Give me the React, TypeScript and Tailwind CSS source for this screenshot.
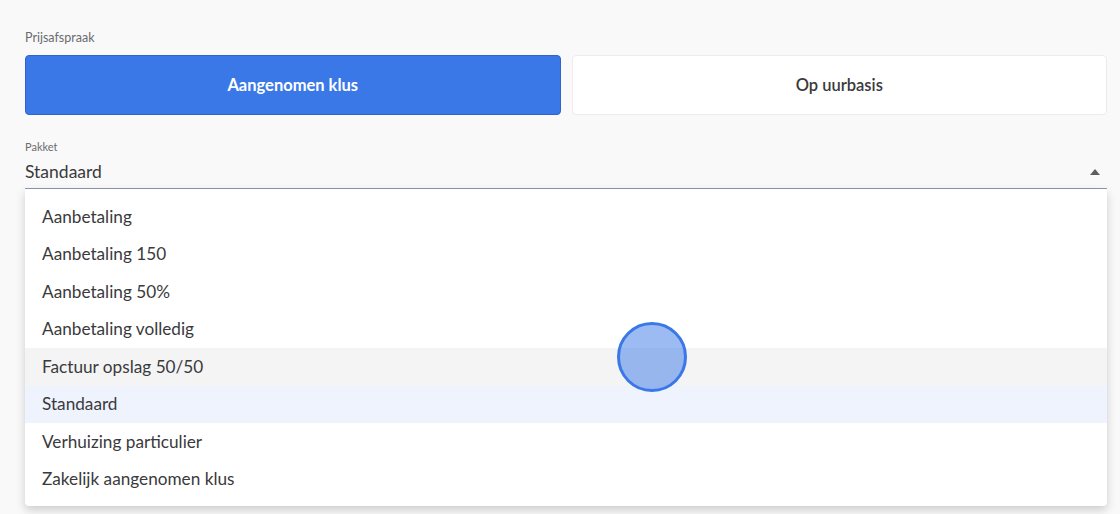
const options = [
  'Aanbetaling',
  'Aanbetaling 150',
  'Aanbetaling 50%',
  'Aanbetaling volledig',
  'Factuur opslag 50/50',
  'Standaard',
  'Verhuizing particulier',
  'Zakelijk aangenomen klus',
]

export default function App() {
  const hovered = 'Factuur opslag 50/50'
  const selected = 'Standaard'

  return (
    <div
      className="relative h-[514px] w-[1120px] overflow-hidden bg-[#f9f9fa] pl-[25px] pr-[13px] pt-[30px] text-[#3a3a3c]"
      style={{ fontFamily: 'Lato, "Open Sans", sans-serif' }}
    >
      <div className="text-[12.5px] leading-[16px] text-[#6b6b6e]">Prijsafspraak</div>
      <div className="mt-[9px] flex gap-[11px]">
        <button className="h-[60px] flex-1 rounded-[4px] border border-[#2f63c9] bg-[#3b78e7] text-[16.5px] font-bold text-white">
          Aangenomen klus
        </button>
        <button className="h-[60px] flex-1 rounded-[4px] border border-[#ececee] bg-white text-[16.5px] font-semibold text-[#3a3a3c]">
          Op uurbasis
        </button>
      </div>

      <div className="relative mt-[25px]">
        <div className="text-[11px] leading-[14px] text-[#6b6b6e]">Pakket</div>
        <div className="flex h-[35px] items-center justify-between border-b border-[#8a97b5] pt-[2px]">
          <span className="text-[17.5px]">Standaard</span>
          <svg width="10" height="6" viewBox="0 0 10 6" className="mr-[7px]">
            <path d="M0 6 L5 0 L10 6 Z" fill="#5f5f62" />
          </svg>
        </div>

        <ul className="absolute left-0 right-0 top-[49px] rounded-b-[4px] bg-white pb-[8px] pt-[9px] shadow-[0_4px_10px_rgba(0,0,0,0.18)]">
          {options.map((o) => (
            <li
              key={o}
              className={
                'flex h-[37.5px] items-center px-[17px] text-[17.2px] ' +
                (o === hovered ? 'bg-[#f4f4f5]' : o === selected ? 'bg-[#eff3fd]' : '')
              }
            >
              {o}
            </li>
          ))}
        </ul>
      </div>

      <div className="pointer-events-none absolute left-[617px] top-[322px] h-[70px] w-[70px] rounded-full border-[3px] border-[#3b78e7] bg-[#3b78e7]/50" />
    </div>
  )
}
